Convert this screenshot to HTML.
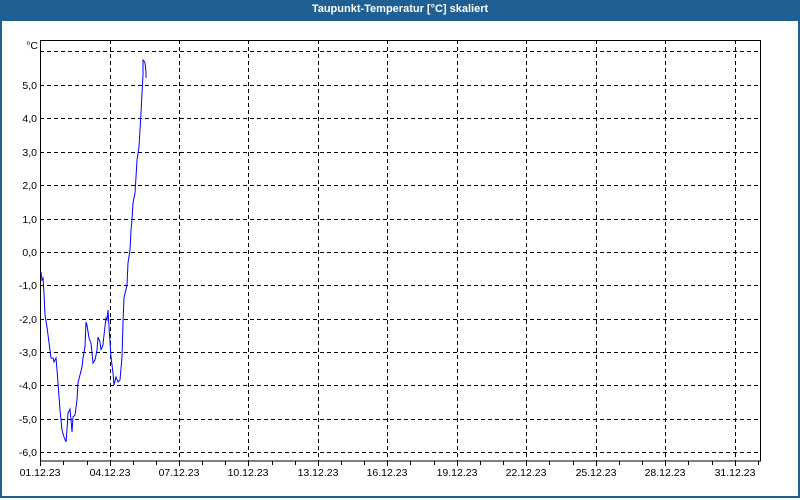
<!DOCTYPE html>
<html><head><meta charset="utf-8"><style>
body{margin:0;width:800px;height:500px;overflow:hidden;background:#fff;font-family:"Liberation Sans",sans-serif}
.frame{position:absolute;left:0;top:0;width:796px;height:496px;border:2px solid #1f5f94;border-top:none;}
.title{position:absolute;left:0;top:0;width:800px;height:21px;background:#1f5f94;color:#fff;font-weight:bold;font-size:11px;text-align:center;line-height:19px}
svg{position:absolute;left:0;top:0}
</style></head><body>
<div class="frame"></div>
<div class="title">Taupunkt-Temperatur [°C] skaliert</div>
<svg width="800" height="500" font-family="Liberation Sans, sans-serif" font-size="10.5">
<g stroke="#000" stroke-dasharray="4,3" stroke-width="1">
<line x1="40" x2="760" y1="51.5" y2="51.5"/><line x1="40" x2="760" y1="85.5" y2="85.5"/><line x1="40" x2="760" y1="118.5" y2="118.5"/><line x1="40" x2="760" y1="152.5" y2="152.5"/><line x1="40" x2="760" y1="185.5" y2="185.5"/><line x1="40" x2="760" y1="219.5" y2="219.5"/><line x1="40" x2="760" y1="252.5" y2="252.5"/><line x1="40" x2="760" y1="285.5" y2="285.5"/><line x1="40" x2="760" y1="319.5" y2="319.5"/><line x1="40" x2="760" y1="352.5" y2="352.5"/><line x1="40" x2="760" y1="385.5" y2="385.5"/><line x1="40" x2="760" y1="419.5" y2="419.5"/><line x1="40" x2="760" y1="452.5" y2="452.5"/>
<line y1="40" y2="461" x1="110.5" x2="110.5"/><line y1="40" y2="461" x1="179.5" x2="179.5"/><line y1="40" y2="461" x1="248.5" x2="248.5"/><line y1="40" y2="461" x1="318.5" x2="318.5"/><line y1="40" y2="461" x1="387.5" x2="387.5"/><line y1="40" y2="461" x1="457.5" x2="457.5"/><line y1="40" y2="461" x1="526.5" x2="526.5"/><line y1="40" y2="461" x1="596.5" x2="596.5"/><line y1="40" y2="461" x1="665.5" x2="665.5"/><line y1="40" y2="461" x1="735.5" x2="735.5"/>
</g>
<rect x="40.5" y="40.5" width="720" height="420.5" fill="none" stroke="#000"/>
<g stroke="#000">
<path d="M40.5 461v5M63.5 461v4M87.5 461v4M110.5 461v5M133.5 461v4M156.5 461v4M179.5 461v5M202.5 461v4M225.5 461v4M248.5 461v5M272.5 461v4M295.5 461v4M318.5 461v5M341.5 461v4M364.5 461v4M387.5 461v5M410.5 461v4M434.5 461v4M457.5 461v5M480.5 461v4M503.5 461v4M526.5 461v5M549.5 461v4M573.5 461v4M596.5 461v5M619.5 461v4M642.5 461v4M665.5 461v5M688.5 461v4M712.5 461v4M735.5 461v5M758.5 461v4"/>
</g>
<polyline fill="none" stroke="#0000ff" stroke-width="1" points="41,272 42,280 43,278 44,293 45,315 47,327 48,335 50,350 51,358 53,358 54,362 56,358 57,370 58,383 60,410 62,430 64,437 66,442 67,430 68,413 70,409 71,420 72,432 73,417 75,415 77,400 78,383 80,375 82,367 83,358 85,347 86,322 87,325 89,338 91,343 92,353 93,363 95,360 97,350 98,337 100,342 101,350 103,345 104,335 106,318 107,320 108,310 109,327 111,357 113,373 114,385 116,377 118,382 120,380 122,357 123,322 124,298 127,285 128,263 130,250 131,230 132,220 133,203 135,193 136,177 137,160 139,147 140,130 141,113 142,93 143,75 143,60 144,61 145,63 146,72 146,78"/>
<g text-anchor="end" fill="#000">
<text x="38" y="49">°C</text>
<text x="37" y="89">5,0</text><text x="37" y="122">4,0</text><text x="37" y="156">3,0</text><text x="37" y="189">2,0</text><text x="37" y="223">1,0</text><text x="37" y="256">0,0</text><text x="37" y="289">-1,0</text><text x="37" y="323">-2,0</text><text x="37" y="356">-3,0</text><text x="37" y="389">-4,0</text><text x="37" y="423">-5,0</text><text x="37" y="456">-6,0</text>
</g>
<g text-anchor="middle" fill="#000">
<text x="40" y="476">01.12.23</text><text x="110" y="476">04.12.23</text><text x="179" y="476">07.12.23</text><text x="248" y="476">10.12.23</text><text x="318" y="476">13.12.23</text><text x="387" y="476">16.12.23</text><text x="457" y="476">19.12.23</text><text x="526" y="476">22.12.23</text><text x="596" y="476">25.12.23</text><text x="665" y="476">28.12.23</text><text x="735" y="476">31.12.23</text>
</g>
</svg>
</body></html>
